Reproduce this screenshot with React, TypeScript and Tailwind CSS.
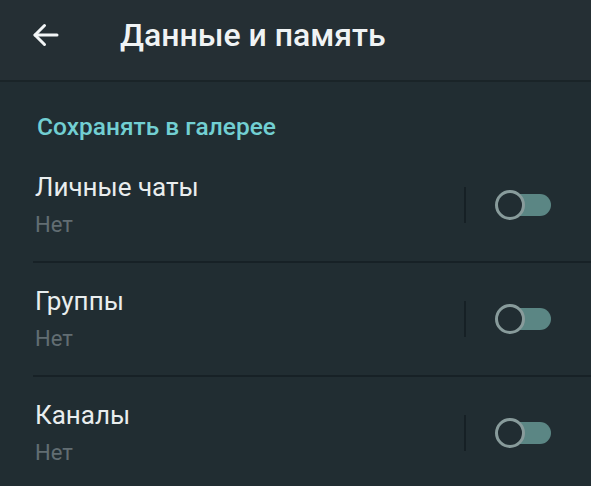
import React from 'react';

const rows = [
  { title: 'Личные чаты', value: 'Нет' },
  { title: 'Группы', value: 'Нет' },
  { title: 'Каналы', value: 'Нет' },
];

const Toggle: React.FC = () => (
  <div className="relative w-[56px] h-[30px]">
    <div className="absolute right-0 top-[4px] h-[22px] w-[44px] rounded-full bg-[#5b8684]"></div>
    <div className="absolute left-0 top-0 w-[30px] h-[30px] rounded-full border-[3px] border-[#889b9b] bg-[#212d32]"></div>
  </div>
);

const App: React.FC = () => {
  return (
    <div className="w-[591px] h-[486px] overflow-hidden bg-[#212d32] font-['Roboto','Noto_Sans',sans-serif]">
      <header className="h-[82px] pb-[11px] bg-[#252f34] border-b-2 border-[#1a2428] flex items-center">
        <svg className="ml-[32px]" width="27" height="24" viewBox="0 0 27 24" fill="none" stroke="#f2f5f6" strokeWidth="3" strokeLinecap="round" strokeLinejoin="round">
          <path d="M25 12H3" />
          <path d="M12.5 2.5L3 12l9.5 9.5" />
        </svg>
        <h1 className="ml-[61px] text-[32px] font-medium text-[#f0f3f4] leading-[38px]">Данные и память</h1>
      </header>

      <div className="pt-[30px] pl-[37px] text-[24.5px] font-medium text-[#72cfd2] leading-[30px]">
        Сохранять в галерее
      </div>

      <div className="mt-[7px]">
        {rows.map((row, idx) => (
          <div key={idx} className="ml-[33px] h-[114px] border-b-2 border-[#172126] flex items-center pr-[40px]">
            <div className="flex-1 pl-[2px]">
              <div className="text-[26px] text-[#e9edee] leading-[30px]">{row.title}</div>
              <div className="mt-[10px] text-[22px] text-[#626d72] leading-[26px]">{row.value}</div>
            </div>
            <div className="w-[2px] h-[36px] bg-[#162025] mr-[29px]"></div>
            <Toggle />
          </div>
        ))}
      </div>
    </div>
  );
};

export default App;
